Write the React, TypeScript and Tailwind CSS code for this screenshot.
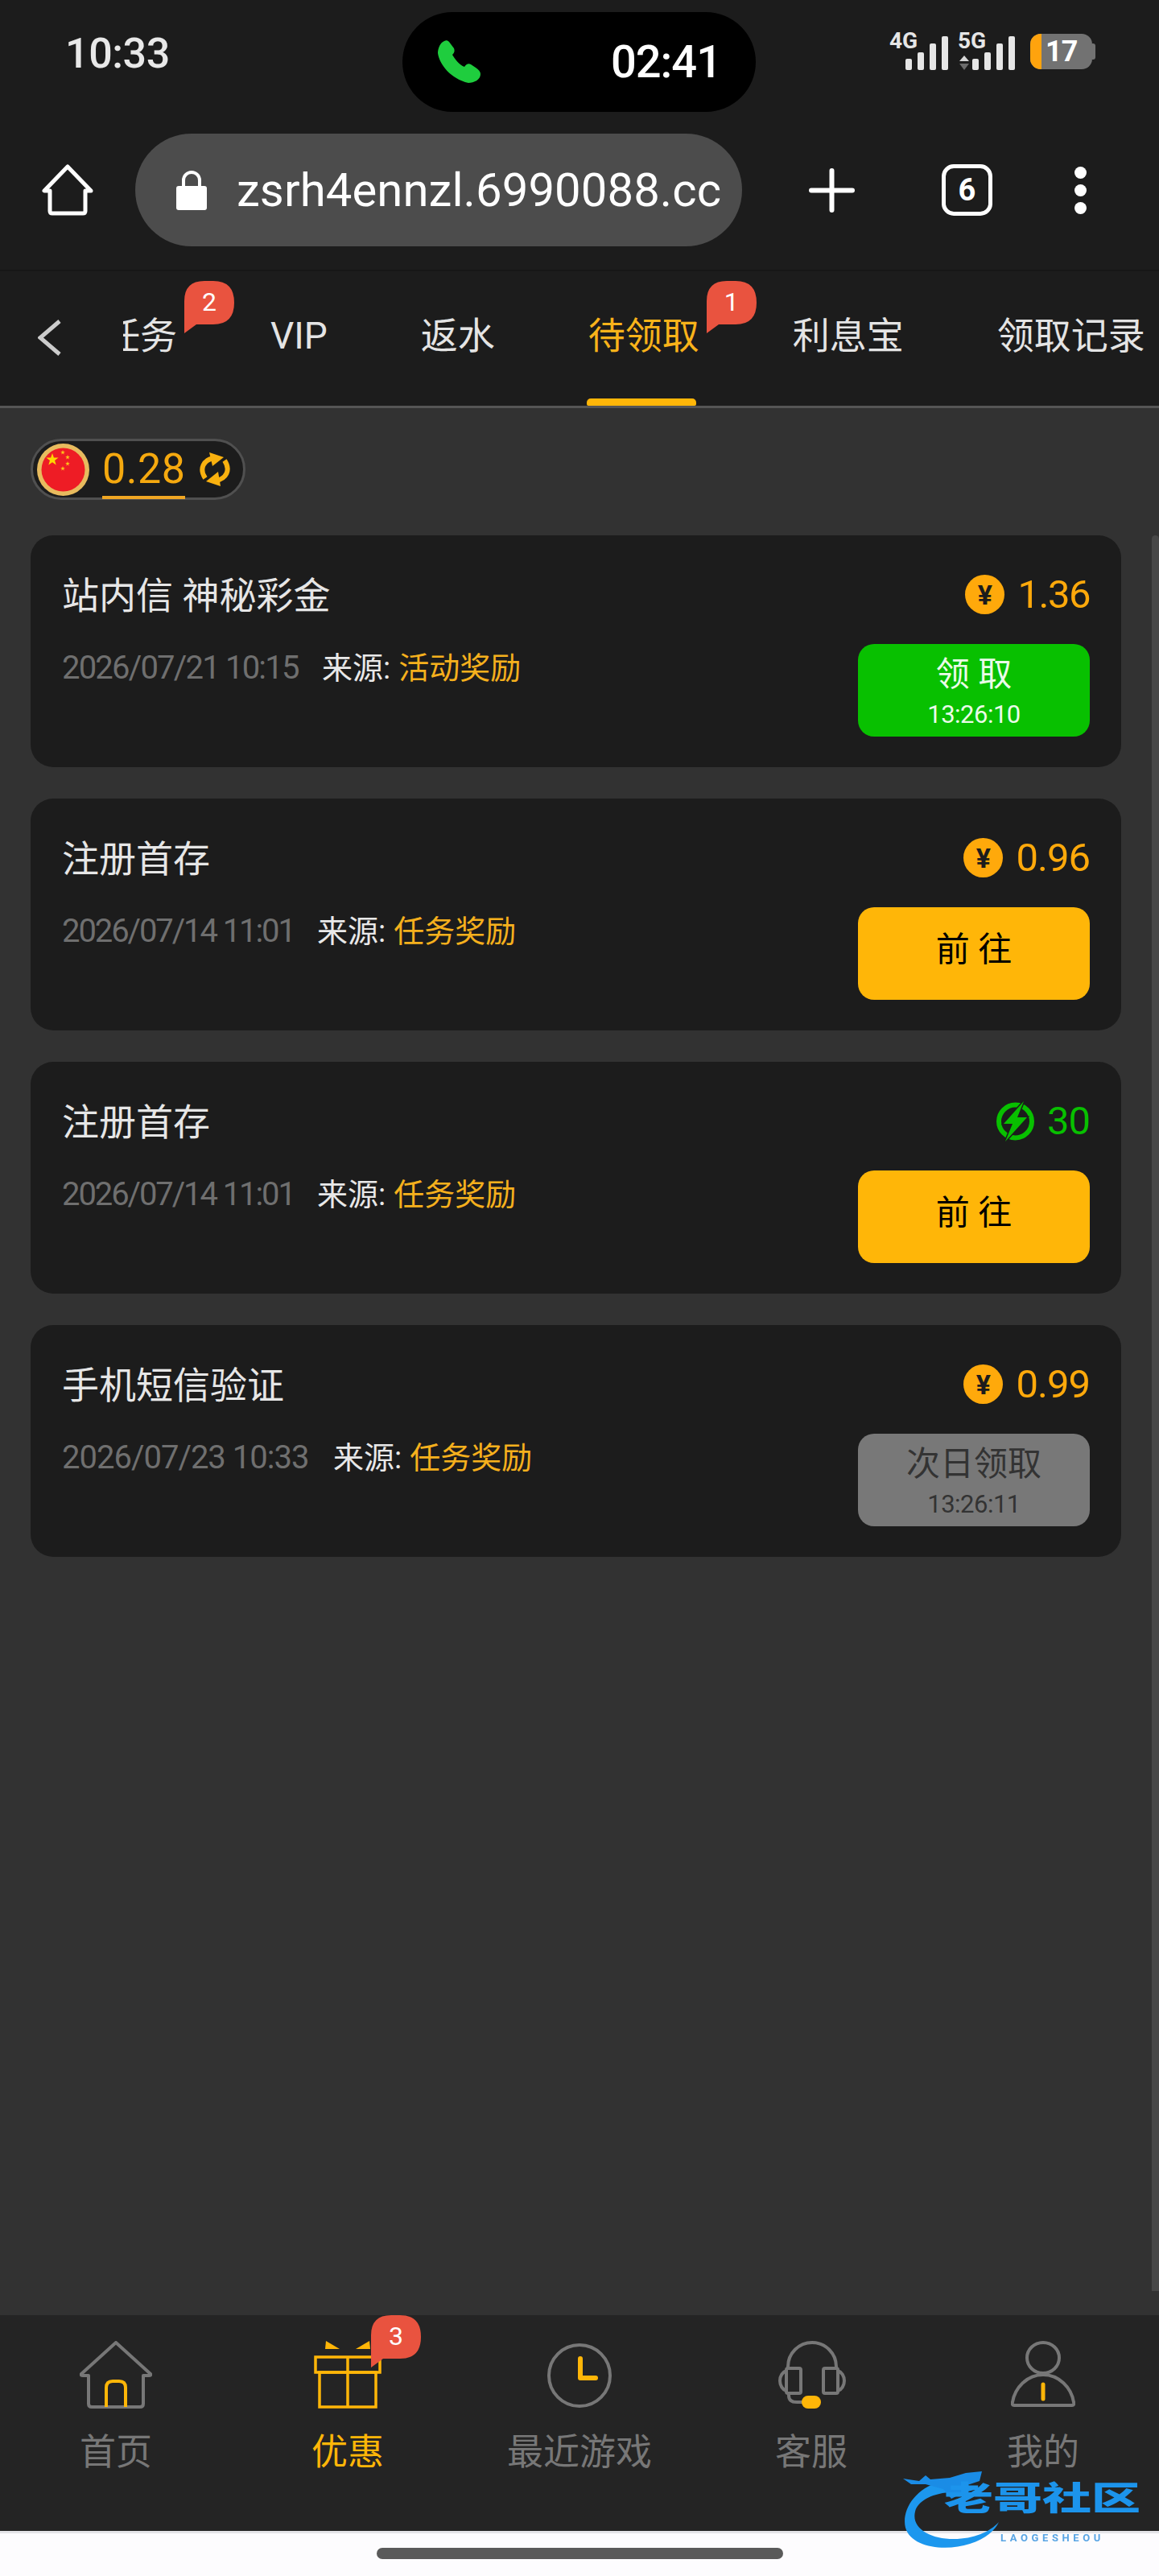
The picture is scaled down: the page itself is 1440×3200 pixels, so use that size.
import { type FC, type ReactNode } from "react";

const tabs = [
  { label: "任务", badge: "2" },
  { label: "VIP" },
  { label: "返水" },
  { label: "待领取", badge: "1", active: true },
  { label: "利息宝" },
  { label: "领取记录" },
];

type Reward = {
  title: string;
  date: string;
  dateClass: string;
  source: string;
  amount: string;
  amountClass: string;
  bolt?: boolean;
  action: string;
  timer?: string;
  tone: "green" | "amber" | "gray";
};

const rewards: Reward[] = [
  {
    title: "站内信 神秘彩金",
    date: "2026/07/21 10:15",
    dateClass: "w-[323px] tracking-[-1.8px]",
    source: "活动奖励",
    amount: "1.36",
    amountClass: "tracking-[-1.5px]",
    action: "领 取",
    timer: "13:26:10",
    tone: "green",
  },
  {
    title: "注册首存",
    date: "2026/07/14 11:01",
    dateClass: "w-[317px] tracking-[-2.1px]",
    source: "任务奖励",
    amount: "0.96",
    amountClass: "tracking-[-1px]",
    action: "前 往",
    tone: "amber",
  },
  {
    title: "注册首存",
    date: "2026/07/14 11:01",
    dateClass: "w-[317px] tracking-[-2.1px]",
    source: "任务奖励",
    amount: "30",
    amountClass: "tracking-[-1px]",
    bolt: true,
    action: "前 往",
    tone: "amber",
  },
  {
    title: "手机短信验证",
    date: "2026/07/23 10:33",
    dateClass: "w-[337px] tracking-[-1px]",
    source: "任务奖励",
    amount: "0.99",
    amountClass: "tracking-[-1px]",
    action: "次日领取",
    timer: "13:26:11",
    tone: "gray",
  },
];

const starPoints = (cx: number, cy: number, r: number) =>
  Array.from({ length: 10 }, (_, i) => {
    const a = (-90 + i * 36) * (Math.PI / 180);
    const d = i % 2 === 0 ? r : r * 0.4;
    return `${cx + d * Math.cos(a)},${cy + d * Math.sin(a)}`;
  }).join(" ");

const Bars = () => (
  <div className="flex items-end gap-[7px]">
    <span className="h-[14px] w-[8px] rounded-[2px] bg-[#e6e6e6]" />
    <span className="h-[22px] w-[8px] rounded-[2px] bg-[#e6e6e6]" />
    <span className="h-[33px] w-[8px] rounded-[2px] bg-[#e6e6e6]" />
    <span className="h-[42px] w-[8px] rounded-[2px] bg-[#e6e6e6]" />
  </div>
);

const SignalIcons = () => (
  <div className="flex items-start pt-[42px]">
    <div className="relative h-[45px] w-[73px]">
      <span className="absolute left-0 top-[-5px] text-[28px] font-bold leading-[28px] text-[#e6e6e6]">
        4G
      </span>
      <div className="absolute bottom-0 left-[20px]">
        <Bars />
      </div>
    </div>
    <div className="relative ml-[12px] h-[45px] w-[72px]">
      <span className="absolute left-0 top-[-5px] text-[28px] font-bold leading-[28px] text-[#e6e6e6]">
        5G
      </span>
      <svg width="12" height="18" viewBox="0 0 12 18" className="absolute bottom-0 left-[2px]">
        <path d="M6 0 L12 7 H0 Z" fill="#d8d8d8" />
        <path d="M0 10 H12 L6 18 Z" fill="#6c6c6c" />
      </svg>
      <div className="absolute bottom-0 left-[18px]">
        <Bars />
      </div>
    </div>
    <div className="ml-[18px] flex items-center">
      <div className="flex h-[44px] w-[77px] overflow-hidden rounded-[13px] bg-[#727272]">
        <span className="h-full w-[14px] bg-[#ffa30d]" />
        <span className="ml-[5px] text-[36px] font-bold leading-[44px] tracking-[-1px] text-white">17</span>
      </div>
      <span className="h-[20px] w-[4px] rounded-r-[3px] bg-[#727272]" />
    </div>
  </div>
);

const StatusRow = () => (
  <div className="grid h-[166px] grid-cols-[500px_439px_1fr]">
    <div className="pl-[81px] pt-[37px] text-[52px] font-medium leading-[60px] tracking-[-0.4px] text-[#e8e8e8]">
      10:33
    </div>
    <div className="mt-[15px] flex h-[124px] items-center justify-between rounded-full bg-black pl-[44px] pr-[43px]">
      <svg width="53" height="53" viewBox="0 0 53 53" className="-mt-[1px]">
        <path
          d="M8 1 C3 3 0 10 0 16 C2 30 16 48 38 53 C45 53 53 49 53 42 C53 39 51 37 47 34 L41 30 C38 28 35 30 33 33 C27 31 21 23 18 18 C21 15 21 13 20 10 L14 2 C12 0 10 0 8 1Z"
          fill="#1fcd3e"
        />
      </svg>
      <span className="text-[56px] font-medium leading-[60px] tracking-[-1px] text-white">02:41</span>
    </div>
    <div className="pl-[166px]">
      <SignalIcons />
    </div>
  </div>
);

const AddressRow = () => (
  <div className="flex h-[140px] items-center">
    <svg width="64" height="64" viewBox="0 0 64 64" className="ml-[52px]" fill="none">
      <path
        d="M32 3 L3 33 H10 V58 Q10 61 13 61 H51 Q54 61 54 58 V33 H61 Z"
        stroke="white"
        strokeWidth="5"
        strokeLinejoin="round"
      />
    </svg>
    <div className="ml-[52px] flex h-[140px] w-[754px] items-center overflow-hidden rounded-full bg-[#4c4c4c] pl-[51px]">
      <svg width="38" height="49" viewBox="0 0 38 49" className="shrink-0">
        <path d="M9 20 V12 A10 10 0 0 1 29 12 V20" fill="none" stroke="white" strokeWidth="4" />
        <rect x="0" y="19" width="38" height="30" rx="3" fill="white" />
      </svg>
      <span className="ml-[37px] whitespace-nowrap text-[58px] leading-[64px] tracking-[0.1px] text-white">
        zsrh4ennzl.6990088.cc
      </span>
    </div>
    <svg width="57" height="55" viewBox="0 0 57 55" className="ml-[83px]">
      <path d="M28.5 3 V52 M3 27.5 H54" stroke="white" strokeWidth="6" strokeLinecap="round" />
    </svg>
    <div className="ml-[108px] flex h-[64px] w-[63px] items-center justify-center rounded-[15px] border-[5px] border-white text-[38px] font-bold leading-none text-white">
      6
    </div>
    <div className="ml-[102px] flex flex-col gap-[7px]">
      <span className="h-[15px] w-[15px] rounded-full bg-white" />
      <span className="h-[15px] w-[15px] rounded-full bg-white" />
      <span className="h-[15px] w-[15px] rounded-full bg-white" />
    </div>
  </div>
);

const Badge: FC<{ value: string; className: string }> = ({ value, className }) => (
  <div className={`absolute h-[65px] w-[62px] ${className}`}>
    <svg width="62" height="65" viewBox="0 0 62 65" className="absolute inset-0">
      <path d="M0 65 V25 Q0 0 25 0 H36 Q62 0 62 27 Q62 54 36 54 H15 Z" fill="#e9533f" />
    </svg>
    <span className="absolute left-0 top-[7px] w-full text-center text-[32px] leading-[38px] text-white">{value}</span>
  </div>
);

const TabBar = () => (
  <nav className="flex h-[170px] border-b-[3px] border-[#555555] bg-[#1c1c1c]">
    <div className="w-[153px] shrink-0 pl-[47px] pt-[60px]">
      <svg width="29" height="45" viewBox="0 0 29 45" fill="none">
        <path d="M27 2 L3 22.5 L27 43" stroke="#cccccc" strokeWidth="5" />
      </svg>
    </div>
    <div className="flex-1 overflow-hidden">
      <div className="-ml-[25px] flex h-full gap-[116px]">
        {tabs.map((tab) => (
          <div
            key={tab.label}
            className={`relative h-full shrink-0 whitespace-nowrap pt-[57px] text-[46px] leading-[46px] ${
              tab.active ? "text-[#f9b31a]" : "text-[#e4e4e4]"
            }`}
          >
            {tab.label}
            {tab.badge && <Badge value={tab.badge} className="left-full top-[12px] ml-[9px]" />}
            {tab.active && (
              <span className="absolute bottom-0 left-[-2px] h-[9px] w-[136px] rounded-t-[5px] rounded-b-[2px] bg-[#ffb608]" />
            )}
          </div>
        ))}
      </div>
    </div>
  </nav>
);

const BalancePill = () => (
  <div className="relative flex h-[76px] w-[267px] items-center rounded-full border-[3px] border-[#505050] bg-[#1c1c1c]">
    <svg width="65" height="65" viewBox="0 0 65 65" className="ml-[5px]">
      <circle cx="32.5" cy="32.5" r="32.5" fill="#e8bb5e" />
      <circle cx="32.5" cy="32.5" r="27" fill="#ee1c25" />
      <polygon points={starPoints(19, 20, 8)} fill="#ffd600" />
      <polygon points={starPoints(32, 11, 3)} fill="#ffc21a" />
      <polygon points={starPoints(38, 17, 3)} fill="#ffc21a" />
      <polygon points={starPoints(38, 25, 3)} fill="#ffc21a" />
      <polygon points={starPoints(32, 31, 3)} fill="#ffc21a" />
    </svg>
    <div className="relative ml-[16px] w-[103px] text-center text-[52px] leading-[60px] tracking-[0.5px] text-[#f5a90f]">
      0.28
      <span className="absolute bottom-[-7px] left-0 h-[4px] w-[103px] bg-[#f0a623]" />
    </div>
    <svg width="40" height="42" viewBox="0 0 40 42" fill="none" className="ml-[17px]">
      <path d="M8 32 C0 20 6 9 19 7" stroke="#f9b10f" strokeWidth="6" />
      <path d="M13 0 L31 6 L17 17 Z" fill="#f9b10f" />
      <path d="M32 10 C40 22 34 33 21 35" stroke="#f9b10f" strokeWidth="6" />
      <path d="M24 24 L9 36 L27 42 Z" fill="#f9b10f" />
    </svg>
  </div>
);

const Coin = () => (
  <span className="flex h-[49px] w-[49px] items-center justify-center rounded-full bg-[#ffa90b] text-[34px] font-bold leading-none text-[#1c1c1c]">
    ¥
  </span>
);

const Bolt = () => (
  <svg width="47" height="50" viewBox="0 0 47 50" fill="none">
    <circle cx="23.5" cy="25" r="20.5" stroke="#08c000" strokeWidth="6" />
    <path d="M34 0 L9 28 H20 L11 50 L38 20 H26 Z" fill="#08c000" stroke="#1c1c1c" strokeWidth="3" paintOrder="stroke" />
  </svg>
);

const toneClass = {
  green: "bg-[#08c000] text-[#eafbe8]",
  amber: "bg-[#ffb608] text-black",
  gray: "bg-[#787878] text-[#333333]",
};

const RewardCard: FC<{ item: Reward }> = ({ item }) => (
  <div className="flex h-[288px] justify-between rounded-[28px] bg-[#1c1c1c] pl-[39px] pr-[39px]">
    <div className="pt-[50px]">
      <div className="text-[46px] leading-[50px] text-[#e6e6e6]">{item.title}</div>
      <div className="mt-[40px] flex h-[50px] items-center text-[38px] leading-[50px]">
        <span className={`whitespace-nowrap text-[40px] text-[#6f6f6f] ${item.dateClass}`}>{item.date}</span>
        <span className="text-[#e8e8e8]">来源:</span>
        <span className="ml-[10px] text-[#f5b01d]">{item.source}</span>
      </div>
    </div>
    <div className="flex flex-col items-end pt-[49px]">
      <div
        className={`flex h-[49px] items-center gap-[16px] text-[49px] leading-[49px] ${
          item.bolt ? "text-[#08c000]" : "text-[#ffa90b]"
        }`}
      >
        {item.bolt ? <Bolt /> : <Coin />}
        <span className={item.amountClass}>{item.amount}</span>
      </div>
      <div
        className={`mt-[37px] flex h-[115px] w-[288px] flex-col items-center rounded-[20px] ${
          item.timer ? "pt-[15px]" : "pt-[30px]"
        } ${toneClass[item.tone]}`}
      >
        <span className="text-[42px] leading-[46px]">{item.action}</span>
        {item.timer && <span className="mt-[9px] text-[31px] leading-[36px] tracking-[-0.5px]">{item.timer}</span>}
      </div>
    </div>
  </div>
);

const HomeIcon = () => (
  <svg width="90" height="84" viewBox="0 0 90 84" fill="none">
    <path
      d="M45 2 L2 41 Q1 43 4 43 H11 V78 Q11 82 15 82 H75 Q79 82 79 78 V43 H86 Q89 43 88 41 Z"
      stroke="#777777"
      strokeWidth="4"
      strokeLinejoin="round"
    />
    <path d="M33 82 V58 Q33 50 41 50 H49 Q57 50 57 58 V82" stroke="#ffb608" strokeWidth="4" />
  </svg>
);

const GiftIcon = () => (
  <svg width="84" height="84" viewBox="0 0 84 84" fill="none">
    <path d="M15 0 L32 10 H14 Z" fill="#ffb608" />
    <path d="M69 0 L52 10 H70 Z" fill="#ffb608" />
    <rect x="2" y="20" width="80" height="19" stroke="#ffb608" strokeWidth="3.5" />
    <rect x="7" y="39" width="70" height="43" stroke="#ffb608" strokeWidth="3.5" />
    <path d="M42 20 V82" stroke="#ffb608" strokeWidth="3.5" />
  </svg>
);

const ClockIcon = () => (
  <svg width="80" height="84" viewBox="0 0 80 84" fill="none">
    <circle cx="40" cy="43" r="38" stroke="#777777" strokeWidth="4" />
    <path d="M41 22 V46 H60" stroke="#ffb608" strokeWidth="6" strokeLinecap="round" strokeLinejoin="round" />
  </svg>
);

const HeadsetIcon = () => (
  <svg width="85" height="84" viewBox="0 0 85 84" fill="none">
    <path d="M13 34 V32 A30 30 0 0 1 73 32 V34" stroke="#777777" strokeWidth="4" />
    <rect x="11" y="34" width="18" height="31" rx="2" stroke="#777777" strokeWidth="4" />
    <rect x="57" y="34" width="18" height="31" rx="2" stroke="#777777" strokeWidth="4" />
    <path d="M11 37 A11 13 0 0 0 11 62" stroke="#777777" strokeWidth="4" />
    <path d="M75 37 A11 13 0 0 1 75 62" stroke="#777777" strokeWidth="4" />
    <path d="M14 65 V68 Q14 76 24 76 H32" stroke="#777777" strokeWidth="4" />
    <rect x="30" y="68" width="24" height="16" rx="8" fill="#ffb608" />
  </svg>
);

const PersonIcon = () => (
  <svg width="80" height="84" viewBox="0 0 80 84" fill="none">
    <ellipse cx="40" cy="21" rx="20" ry="19" stroke="#777777" strokeWidth="4" />
    <path
      d="M4 80 H76 Q79 80 78 76 C75 58 60 42 40 42 C20 42 5 58 2 76 Q1 80 4 80 Z"
      stroke="#777777"
      strokeWidth="4"
    />
    <path d="M40 54 V72" stroke="#ffb608" strokeWidth="5" strokeLinecap="round" />
  </svg>
);

const navItems: { label: string; icon: ReactNode; active?: boolean; badge?: string }[] = [
  { label: "首页", icon: <HomeIcon /> },
  { label: "优惠", icon: <GiftIcon />, active: true, badge: "3" },
  { label: "最近游戏", icon: <ClockIcon /> },
  { label: "客服", icon: <HeadsetIcon /> },
  { label: "我的", icon: <PersonIcon /> },
];

const BottomNav = () => (
  <div className="grid h-[268px] grid-cols-5 bg-[#242424]">
    {navItems.map((item) => (
      <div key={item.label} className="flex flex-col items-center pt-[32px]">
        <div className="relative flex h-[84px] items-center justify-center">
          {item.icon}
          {item.badge && <Badge value={item.badge} className="left-[71px] top-[-32px] h-[65px]" />}
        </div>
        <span
          className={`mt-[32px] text-[45px] leading-[46px] ${item.active ? "text-[#ffb608]" : "text-[#777777]"}`}
        >
          {item.label}
        </span>
      </div>
    ))}
  </div>
);

const Watermark = () => (
  <div className="absolute left-[1120px] top-[3070px] h-[100px] w-[300px] blur-[0.6px]">
    <svg width="130" height="100" viewBox="0 0 130 100" className="absolute inset-0">
      <path
        d="M48 13 C15 22 0 50 5 70 C12 95 55 100 85 90 C105 84 117 72 121 63 C110 75 90 84 65 84 C35 84 12 70 17 50 C20 38 35 28 60 26 Z"
        fill="#1c97ee"
      />
      <path
        d="M2 9 L22 12 L30 5 L36 10 L60 8 L80 2 L100 0 L97 12 L82 17 L94 22 L76 27 L62 34 L52 22 L30 16 L12 16 Z"
        fill="#1a8ce6"
      />
    </svg>
    <span className="absolute left-[53px] top-[-1px] scale-y-[0.68] whitespace-nowrap text-[61px] font-black leading-[70px] text-[#1c94ec]">
      老哥社区
    </span>
    <span className="absolute left-[123px] top-[76px] whitespace-nowrap text-[13px] font-bold leading-[14px] tracking-[4.6px] text-[#5aa5e4]">
      LAOGESHEOU
    </span>
  </div>
);

const App = () => {
  return (
    <div className="relative flex h-[3200px] w-[1440px] flex-col overflow-hidden bg-[#fdfcfe] font-['Roboto','Noto_Sans_CJK_SC',sans-serif]">
      <header className="h-[337px] border-b-2 border-[#171717] bg-[#1c1c1c]">
        <StatusRow />
        <AddressRow />
      </header>
      <TabBar />
      <main className="flex h-[2369px] bg-[#323232]">
        <div className="flex-1 pl-[38px] pr-[38px] pt-[38px]">
          <BalancePill />
          <div className="mt-[44px] flex w-[1355px] flex-col gap-[39px]">
            {rewards.map((item, index) => (
              <RewardCard key={index} item={item} />
            ))}
          </div>
        </div>
        <aside className="mb-[30px] mt-[158px] w-[9px] rounded-t-[5px] bg-[#474747]" />
      </main>
      <BottomNav />
      <div className="h-[3px] bg-[#e4e4e8]" />
      <div className="flex flex-1 justify-center pt-[18px]">
        <span className="h-[14px] w-[505px] rounded-full bg-[#5a5a5a]" />
      </div>
      <Watermark />
    </div>
  );
};

export default App;
